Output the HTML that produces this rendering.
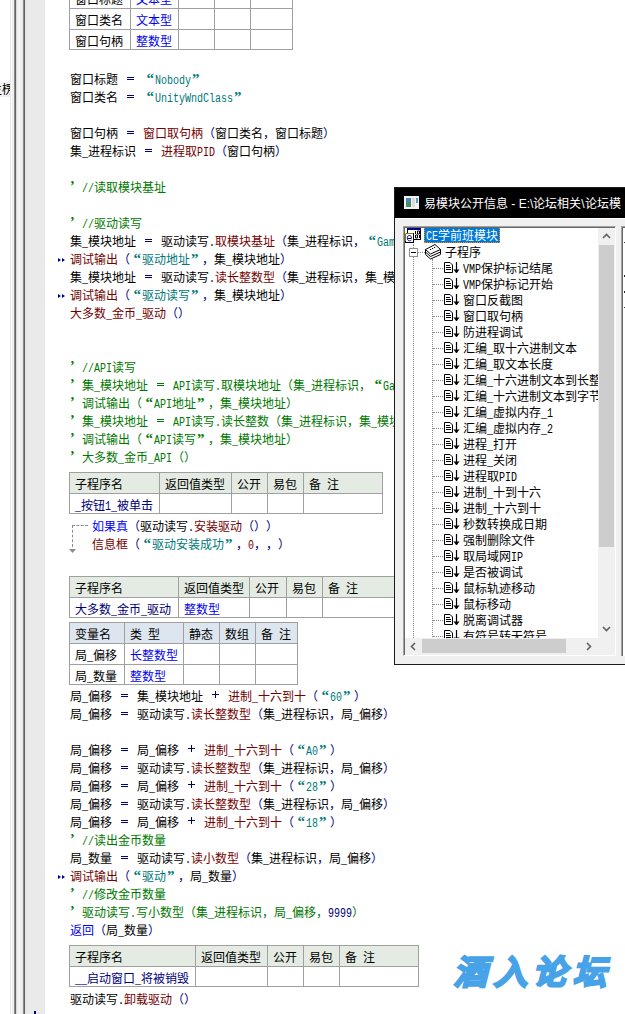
<!DOCTYPE html>
<html lang="zh-CN"><head><meta charset="utf-8"><style>
html,body{margin:0;padding:0}
body{width:625px;height:1014px;position:relative;overflow:hidden;background:#fff;font-family:"Liberation Mono",monospace;font-size:12px;text-spacing-trim:space-all;font-kerning:none}
.ln{position:absolute;white-space:pre;line-height:18px;height:18px;color:#000}
i{font-style:normal}
.ql,.qr{display:inline-block;width:12px;height:18px;vertical-align:top;position:relative}
.ql:before,.qr:before{position:absolute;top:0;font:bold 15px/15px "Liberation Serif",serif}
.ql:before{content:"\201C";right:1px;top:-1px}
.qr:before{content:"\201D";left:1px}
.op{display:inline-block;width:25px;height:18px;vertical-align:top;position:relative}
.eq:before{content:"";position:absolute;left:9px;top:5px;width:7px;height:1px;border-top:1px solid;border-bottom:1px solid}
.pl:before{content:"";position:absolute;left:9px;top:5px;width:7px;height:1px;background:currentColor}
.pl:after{content:"";position:absolute;left:12px;top:2px;width:1px;height:7px;background:currentColor}
.a,.c{display:inline-block;font-weight:normal}
.a>b{display:inline-block;font-weight:normal;transform:scaleX(.8333);transform-origin:0 0}
.abs{position:absolute}
.ap{display:inline-block;width:6px;height:18px;vertical-align:top;position:relative}
.ap:before{content:"\2019";position:absolute;left:0px;top:0px;font:bold 14px/14px "Liberation Serif",serif}
.mk{position:absolute;left:58px;width:8px;height:5px}
.mk:before,.mk:after{content:"";position:absolute;top:0;border-left:3px solid #000080;border-top:2.5px solid transparent;border-bottom:2.5px solid transparent}
.mk:before{left:0}.mk:after{left:4px}
#pop{position:absolute;left:394px;top:187px;width:260px;height:478px;background:#f0f0f0;border:1px solid #1b1b1b;box-sizing:border-box;overflow:hidden}
#ttl{position:absolute;left:0;top:0;right:0;height:30px;background:#000}
#tbox{position:absolute;left:8px;top:38px;width:211px;height:428px;background:#fff;border-left:1px solid #a0a0a0;border-top:1px solid #a0a0a0;border-right:1px solid #fff;border-bottom:1px solid #fff;box-shadow:inset 1px 1px 0 #696969}
#tcli{position:absolute;left:1px;top:1px;width:193px;height:410px;overflow:hidden;background:#fff}
.vd{position:absolute;width:0;border-left:1px dotted #8a8a8a}
.hd{position:absolute;height:0;border-top:1px dotted #8a8a8a}
#rbox{position:absolute;left:226px;top:38px;width:20px;height:429px;background:#fff;border-left:1px solid #a0a0a0;border-top:1px solid #a0a0a0;box-shadow:inset 1px 1px 0 #696969}
</style></head><body>
<svg width="0" height="0" style="position:absolute"><defs><g id="itm"><path d="M0.5 0.5 H6 L8.5 3 V10.5 H0.5 Z" fill="#fff" stroke="#000"/><path d="M2 3.5h4M2 5.5h5M2 7.5h5" stroke="#000"/><path d="M12.5 0 V10" stroke="#000" stroke-width="1.2"/><path d="M10 7.5 L12.5 11 L15 7.5" fill="#000" stroke="#000" stroke-width="0.8"/></g></defs></svg>
<div style="position:absolute;left:10px;top:0;width:35px;height:1014px;background:linear-gradient(to right,#e8e8e8 0 1px,#fafafa 1px 2px,#efefef 2px 4px,#8a8a8a 4px 5px,#646464 5px 6px,#d8d8d8 6px 7px,#f0f0f0 7px 9px,#f8f8f8 9px 10px,#ececec 10px 13px,#8a8a8a 13px 14px,#646464 14px 15px,#e2e2e2 15px 16px,#eaeaea 16px 35px)"></div>
<div style="position:absolute;left:0;top:82px;width:10px;height:15px;background:#f0f0f0;overflow:hidden"><div class="ln" style="left:-10px;top:0px">主楞</div></div>
<div style="position:absolute;left:69px;top:-13px;width:224px;height:1px;background:#a0a0a0"></div>
<div style="position:absolute;left:69px;top:8px;width:224px;height:1px;background:#a0a0a0"></div>
<div style="position:absolute;left:69px;top:29px;width:224px;height:1px;background:#a0a0a0"></div>
<div style="position:absolute;left:69px;top:49px;width:224px;height:1px;background:#a0a0a0"></div>
<div style="position:absolute;left:69px;top:-13px;width:1px;height:63px;background:#a0a0a0"></div>
<div style="position:absolute;left:130px;top:-13px;width:1px;height:63px;background:#a0a0a0"></div>
<div style="position:absolute;left:178px;top:-13px;width:1px;height:63px;background:#a0a0a0"></div>
<div style="position:absolute;left:214px;top:-13px;width:1px;height:63px;background:#a0a0a0"></div>
<div style="position:absolute;left:250px;top:-13px;width:1px;height:63px;background:#a0a0a0"></div>
<div style="position:absolute;left:292px;top:-13px;width:1px;height:63px;background:#a0a0a0"></div>
<div class="ln" style="left:75px;top:-8px"><b class="c" style="width:48px">窗口标题</b></div>
<div class="ln" style="left:136px;top:-8px"><span style="color:#0000f0"><b class="c" style="width:36px">文本型</b></span></div>
<div class="ln" style="left:75px;top:13px"><b class="c" style="width:48px">窗口类名</b></div>
<div class="ln" style="left:136px;top:13px"><span style="color:#0000f0"><b class="c" style="width:36px">文本型</b></span></div>
<div class="ln" style="left:75px;top:34px"><b class="c" style="width:48px">窗口句柄</b></div>
<div class="ln" style="left:136px;top:34px"><span style="color:#0000f0"><b class="c" style="width:36px">整数型</b></span></div>
<div class="ln" style="left:70px;top:72px"><b class="c" style="width:48px">窗口标题</b><span style="color:#000078"><i class="op eq"></i></span><span style="color:#007878"><i class="ql"></i><b class="a" style="width:36px"><b>Nobody</b></b><i class="qr"></i></span></div>
<div class="ln" style="left:70px;top:90px"><b class="c" style="width:48px">窗口类名</b><span style="color:#000078"><i class="op eq"></i></span><span style="color:#007878"><i class="ql"></i><b class="a" style="width:78px"><b>UnityWndClass</b></b><i class="qr"></i></span></div>
<div class="ln" style="left:70px;top:126px"><b class="c" style="width:48px">窗口句柄</b><span style="color:#000078"><i class="op eq"></i></span><span style="color:#740000"><b class="c" style="width:60px">窗口取句柄</b></span><b class="c" style="width:12px;color:#000080">（</b><b class="c" style="width:48px">窗口类名</b><b class="c" style="width:12px;color:#000080">，</b><b class="c" style="width:48px">窗口标题</b><b class="c" style="width:12px;color:#000080">）</b></div>
<div class="ln" style="left:70px;top:144px"><b class="c" style="width:12px">集</b><b class="a" style="width:6px"><b>_</b></b><b class="c" style="width:48px">进程标识</b><span style="color:#000078"><i class="op eq"></i></span><span style="color:#740000"><b class="c" style="width:36px">进程取</b><b class="a" style="width:18px"><b>PID</b></b></span><b class="c" style="width:12px;color:#000080">（</b><b class="c" style="width:48px">窗口句柄</b><b class="c" style="width:12px;color:#000080">）</b></div>
<div class="ln" style="left:70px;top:180px"><span style="color:#007800"><i class="ap"></i><b class="a" style="width:18px"><b> //</b></b><b class="c" style="width:72px">读取模块基址</b></span></div>
<div class="ln" style="left:70px;top:216px"><span style="color:#007800"><i class="ap"></i><b class="a" style="width:18px"><b> //</b></b><b class="c" style="width:48px">驱动读写</b></span></div>
<div class="ln" style="left:70px;top:234px"><b class="c" style="width:12px">集</b><b class="a" style="width:6px"><b>_</b></b><b class="c" style="width:48px">模块地址</b><span style="color:#000078"><i class="op eq"></i></span><b class="c" style="width:48px">驱动读写</b><b class="a" style="width:6px"><b>.</b></b><span style="color:#740000"><b class="c" style="width:60px">取模块基址</b></span><b class="c" style="width:12px;color:#000080">（</b><b class="c" style="width:12px">集</b><b class="a" style="width:6px"><b>_</b></b><b class="c" style="width:48px">进程标识</b><b class="c" style="width:12px;color:#000080">，</b><span style="color:#007878"><i class="ql"></i><b class="a" style="width:96px"><b>GameAssembly.dll</b></b><i class="qr"></i></span><b class="c" style="width:12px;color:#000080">）</b></div>
<div class="ln" style="left:70px;top:252px"><span style="color:#740000"><b class="c" style="width:48px">调试输出</b></span><b class="c" style="width:12px;color:#000080">（</b><span style="color:#007878"><i class="ql"></i><b class="c" style="width:48px">驱动地址</b><i class="qr"></i></span><b class="c" style="width:12px;color:#000080">，</b><b class="c" style="width:12px">集</b><b class="a" style="width:6px"><b>_</b></b><b class="c" style="width:48px">模块地址</b><b class="c" style="width:12px;color:#000080">）</b></div>
<div class="ln" style="left:70px;top:270px"><b class="c" style="width:12px">集</b><b class="a" style="width:6px"><b>_</b></b><b class="c" style="width:48px">模块地址</b><span style="color:#000078"><i class="op eq"></i></span><b class="c" style="width:48px">驱动读写</b><b class="a" style="width:6px"><b>.</b></b><span style="color:#740000"><b class="c" style="width:60px">读长整数型</b></span><b class="c" style="width:12px;color:#000080">（</b><b class="c" style="width:12px">集</b><b class="a" style="width:6px"><b>_</b></b><b class="c" style="width:48px">进程标识</b><b class="c" style="width:12px;color:#000080">，</b><b class="c" style="width:12px">集</b><b class="a" style="width:6px"><b>_</b></b><b class="c" style="width:48px">模块地址</b><b class="c" style="width:12px;color:#000080">）</b></div>
<div class="ln" style="left:70px;top:288px"><span style="color:#740000"><b class="c" style="width:48px">调试输出</b></span><b class="c" style="width:12px;color:#000080">（</b><span style="color:#007878"><i class="ql"></i><b class="c" style="width:48px">驱动读写</b><i class="qr"></i></span><b class="c" style="width:12px;color:#000080">，</b><b class="c" style="width:12px">集</b><b class="a" style="width:6px"><b>_</b></b><b class="c" style="width:48px">模块地址</b><b class="c" style="width:12px;color:#000080">）</b></div>
<div class="ln" style="left:70px;top:306px"><span style="color:#740000"><b class="c" style="width:36px">大多数</b><b class="a" style="width:6px"><b>_</b></b><b class="c" style="width:24px">金币</b><b class="a" style="width:6px"><b>_</b></b><b class="c" style="width:24px">驱动</b></span><b class="c" style="width:12px;color:#000080">（</b><b class="c" style="width:12px;color:#000080">）</b></div>
<div class="ln" style="left:70px;top:360px"><span style="color:#007800"><i class="ap"></i><b class="a" style="width:36px"><b> //API</b></b><b class="c" style="width:24px">读写</b></span></div>
<div class="ln" style="left:70px;top:378px"><span style="color:#007800"><i class="ap"></i><b class="a" style="width:6px"><b> </b></b><b class="c" style="width:12px">集</b><b class="a" style="width:6px"><b>_</b></b><b class="c" style="width:48px">模块地址</b><i class="op eq"></i><b class="a" style="width:18px"><b>API</b></b><b class="c" style="width:24px">读写</b><b class="a" style="width:6px"><b>.</b></b><b class="c" style="width:84px">取模块地址（集</b><b class="a" style="width:6px"><b>_</b></b><b class="c" style="width:60px">进程标识，</b><i class="ql"></i><b class="a" style="width:96px"><b>GameAssembly.dll</b></b><i class="qr"></i><b class="c" style="width:12px">）</b></span></div>
<div class="ln" style="left:70px;top:396px"><span style="color:#007800"><i class="ap"></i><b class="a" style="width:6px"><b> </b></b><b class="c" style="width:60px">调试输出（</b><i class="ql"></i><b class="a" style="width:18px"><b>API</b></b><b class="c" style="width:24px">地址</b><i class="qr"></i><b class="c" style="width:24px">，集</b><b class="a" style="width:6px"><b>_</b></b><b class="c" style="width:60px">模块地址）</b></span></div>
<div class="ln" style="left:70px;top:414px"><span style="color:#007800"><i class="ap"></i><b class="a" style="width:6px"><b> </b></b><b class="c" style="width:12px">集</b><b class="a" style="width:6px"><b>_</b></b><b class="c" style="width:48px">模块地址</b><i class="op eq"></i><b class="a" style="width:18px"><b>API</b></b><b class="c" style="width:24px">读写</b><b class="a" style="width:6px"><b>.</b></b><b class="c" style="width:72px">读长整数（集</b><b class="a" style="width:6px"><b>_</b></b><b class="c" style="width:72px">进程标识，集</b><b class="a" style="width:6px"><b>_</b></b><b class="c" style="width:60px">模块地址）</b></span></div>
<div class="ln" style="left:70px;top:432px"><span style="color:#007800"><i class="ap"></i><b class="a" style="width:6px"><b> </b></b><b class="c" style="width:60px">调试输出（</b><i class="ql"></i><b class="a" style="width:18px"><b>API</b></b><b class="c" style="width:24px">读写</b><i class="qr"></i><b class="c" style="width:24px">，集</b><b class="a" style="width:6px"><b>_</b></b><b class="c" style="width:60px">模块地址）</b></span></div>
<div class="ln" style="left:70px;top:450px"><span style="color:#007800"><i class="ap"></i><b class="a" style="width:6px"><b> </b></b><b class="c" style="width:36px">大多数</b><b class="a" style="width:6px"><b>_</b></b><b class="c" style="width:24px">金币</b><b class="a" style="width:24px"><b>_API</b></b><b class="c" style="width:24px">（）</b></span></div>
<div style="position:absolute;left:69px;top:472px;width:313px;height:21px;background:#e4ebe3"></div>
<div style="position:absolute;left:69px;top:472px;width:314px;height:1px;background:#a0a0a0"></div>
<div style="position:absolute;left:69px;top:493px;width:314px;height:1px;background:#a0a0a0"></div>
<div style="position:absolute;left:69px;top:513px;width:314px;height:1px;background:#a0a0a0"></div>
<div style="position:absolute;left:69px;top:472px;width:1px;height:42px;background:#a0a0a0"></div>
<div style="position:absolute;left:159px;top:472px;width:1px;height:42px;background:#a0a0a0"></div>
<div style="position:absolute;left:231px;top:472px;width:1px;height:42px;background:#a0a0a0"></div>
<div style="position:absolute;left:267px;top:472px;width:1px;height:42px;background:#a0a0a0"></div>
<div style="position:absolute;left:303px;top:472px;width:1px;height:42px;background:#a0a0a0"></div>
<div style="position:absolute;left:382px;top:472px;width:1px;height:42px;background:#a0a0a0"></div>
<div class="ln" style="left:75px;top:477px"><b class="c" style="width:48px">子程序名</b></div>
<div class="ln" style="left:165px;top:477px"><b class="c" style="width:60px">返回值类型</b></div>
<div class="ln" style="left:237px;top:477px"><b class="c" style="width:24px">公开</b></div>
<div class="ln" style="left:273px;top:477px"><b class="c" style="width:24px">易包</b></div>
<div class="ln" style="left:309px;top:477px"><b class="c" style="width:12px">备</b><b class="a" style="width:6px"><b> </b></b><b class="c" style="width:12px">注</b></div>
<div class="ln" style="left:75px;top:498px"><span style="color:#000078"><b class="a" style="width:6px"><b>_</b></b><b class="c" style="width:24px">按钮</b><b class="a" style="width:12px"><b>1_</b></b><b class="c" style="width:36px">被单击</b></span></div>
<div class="ln" style="left:92px;top:519px"><span style="color:#0000f0"><b class="c" style="width:36px">如果真</b></span><b class="c" style="width:12px;color:#000080">（</b><b class="c" style="width:48px">驱动读写</b><b class="a" style="width:6px"><b>.</b></b><span style="color:#740000"><b class="c" style="width:48px">安装驱动</b></span><span style="color:#000078"><b class="c" style="width:36px">（））</b></span></div>
<div class="ln" style="left:92px;top:537px"><span style="color:#740000"><b class="c" style="width:36px">信息框</b></span><b class="c" style="width:12px;color:#000080">（</b><span style="color:#007878"><i class="ql"></i><b class="c" style="width:72px">驱动安装成功</b><i class="qr"></i></span><b class="c" style="width:12px;color:#000080">，</b><span style="color:#740000"><b class="a" style="width:6px"><b>0</b></b></span><b class="c" style="width:12px;color:#000080">，</b><b class="c" style="width:12px;color:#000080">，</b><span style="color:#000078"><b class="c" style="width:12px">）</b></span></div>
<div style="position:absolute;left:69px;top:576px;width:451px;height:21px;background:#e4ebe3"></div>
<div style="position:absolute;left:69px;top:576px;width:452px;height:1px;background:#a0a0a0"></div>
<div style="position:absolute;left:69px;top:597px;width:452px;height:1px;background:#a0a0a0"></div>
<div style="position:absolute;left:69px;top:617px;width:452px;height:1px;background:#a0a0a0"></div>
<div style="position:absolute;left:69px;top:576px;width:1px;height:42px;background:#a0a0a0"></div>
<div style="position:absolute;left:178px;top:576px;width:1px;height:42px;background:#a0a0a0"></div>
<div style="position:absolute;left:249px;top:576px;width:1px;height:42px;background:#a0a0a0"></div>
<div style="position:absolute;left:286px;top:576px;width:1px;height:42px;background:#a0a0a0"></div>
<div style="position:absolute;left:322px;top:576px;width:1px;height:42px;background:#a0a0a0"></div>
<div style="position:absolute;left:520px;top:576px;width:1px;height:42px;background:#a0a0a0"></div>
<div class="ln" style="left:75px;top:581px"><b class="c" style="width:48px">子程序名</b></div>
<div class="ln" style="left:184px;top:581px"><b class="c" style="width:60px">返回值类型</b></div>
<div class="ln" style="left:255px;top:581px"><b class="c" style="width:24px">公开</b></div>
<div class="ln" style="left:292px;top:581px"><b class="c" style="width:24px">易包</b></div>
<div class="ln" style="left:328px;top:581px"><b class="c" style="width:12px">备</b><b class="a" style="width:6px"><b> </b></b><b class="c" style="width:12px">注</b></div>
<div class="ln" style="left:75px;top:602px"><span style="color:#000078"><b class="c" style="width:36px">大多数</b><b class="a" style="width:6px"><b>_</b></b><b class="c" style="width:24px">金币</b><b class="a" style="width:6px"><b>_</b></b><b class="c" style="width:24px">驱动</b></span></div>
<div class="ln" style="left:184px;top:602px"><span style="color:#0000f0"><b class="c" style="width:36px">整数型</b></span></div>
<div style="position:absolute;left:69px;top:622px;width:228px;height:21px;background:#dde6ef"></div>
<div style="position:absolute;left:69px;top:622px;width:229px;height:1px;background:#a0a0a0"></div>
<div style="position:absolute;left:69px;top:643px;width:229px;height:1px;background:#a0a0a0"></div>
<div style="position:absolute;left:69px;top:664px;width:229px;height:1px;background:#a0a0a0"></div>
<div style="position:absolute;left:69px;top:684px;width:229px;height:1px;background:#a0a0a0"></div>
<div style="position:absolute;left:69px;top:622px;width:1px;height:63px;background:#a0a0a0"></div>
<div style="position:absolute;left:124px;top:622px;width:1px;height:63px;background:#a0a0a0"></div>
<div style="position:absolute;left:183px;top:622px;width:1px;height:63px;background:#a0a0a0"></div>
<div style="position:absolute;left:219px;top:622px;width:1px;height:63px;background:#a0a0a0"></div>
<div style="position:absolute;left:255px;top:622px;width:1px;height:63px;background:#a0a0a0"></div>
<div style="position:absolute;left:297px;top:622px;width:1px;height:63px;background:#a0a0a0"></div>
<div class="ln" style="left:75px;top:627px"><b class="c" style="width:36px">变量名</b></div>
<div class="ln" style="left:130px;top:627px"><b class="c" style="width:12px">类</b><b class="a" style="width:6px"><b> </b></b><b class="c" style="width:12px">型</b></div>
<div class="ln" style="left:189px;top:627px"><b class="c" style="width:24px">静态</b></div>
<div class="ln" style="left:225px;top:627px"><b class="c" style="width:24px">数组</b></div>
<div class="ln" style="left:261px;top:627px"><b class="c" style="width:12px">备</b><b class="a" style="width:6px"><b> </b></b><b class="c" style="width:12px">注</b></div>
<div class="ln" style="left:75px;top:648px"><b class="c" style="width:12px">局</b><b class="a" style="width:6px"><b>_</b></b><b class="c" style="width:24px">偏移</b></div>
<div class="ln" style="left:130px;top:648px"><span style="color:#0000f0"><b class="c" style="width:48px">长整数型</b></span></div>
<div class="ln" style="left:75px;top:669px"><b class="c" style="width:12px">局</b><b class="a" style="width:6px"><b>_</b></b><b class="c" style="width:24px">数量</b></div>
<div class="ln" style="left:130px;top:669px"><span style="color:#0000f0"><b class="c" style="width:36px">整数型</b></span></div>
<div class="ln" style="left:70px;top:689px"><b class="c" style="width:12px">局</b><b class="a" style="width:6px"><b>_</b></b><b class="c" style="width:24px">偏移</b><span style="color:#000078"><i class="op eq"></i></span><b class="c" style="width:12px">集</b><b class="a" style="width:6px"><b>_</b></b><b class="c" style="width:48px">模块地址</b><span style="color:#000078"><i class="op pl"></i></span><span style="color:#740000"><b class="c" style="width:24px">进制</b><b class="a" style="width:6px"><b>_</b></b><b class="c" style="width:48px">十六到十</b></span><b class="c" style="width:12px;color:#000080">（</b><span style="color:#007878"><i class="ql"></i><b class="a" style="width:12px"><b>60</b></b><i class="qr"></i></span><b class="c" style="width:12px;color:#000080">）</b></div>
<div class="ln" style="left:70px;top:707px"><b class="c" style="width:12px">局</b><b class="a" style="width:6px"><b>_</b></b><b class="c" style="width:24px">偏移</b><span style="color:#000078"><i class="op eq"></i></span><b class="c" style="width:48px">驱动读写</b><b class="a" style="width:6px"><b>.</b></b><span style="color:#740000"><b class="c" style="width:60px">读长整数型</b></span><b class="c" style="width:12px;color:#000080">（</b><b class="c" style="width:12px">集</b><b class="a" style="width:6px"><b>_</b></b><b class="c" style="width:48px">进程标识</b><b class="c" style="width:12px;color:#000080">，</b><b class="c" style="width:12px">局</b><b class="a" style="width:6px"><b>_</b></b><b class="c" style="width:24px">偏移</b><b class="c" style="width:12px;color:#000080">）</b></div>
<div class="ln" style="left:70px;top:743px"><b class="c" style="width:12px">局</b><b class="a" style="width:6px"><b>_</b></b><b class="c" style="width:24px">偏移</b><span style="color:#000078"><i class="op eq"></i></span><b class="c" style="width:12px">局</b><b class="a" style="width:6px"><b>_</b></b><b class="c" style="width:24px">偏移</b><span style="color:#000078"><i class="op pl"></i></span><span style="color:#740000"><b class="c" style="width:24px">进制</b><b class="a" style="width:6px"><b>_</b></b><b class="c" style="width:48px">十六到十</b></span><b class="c" style="width:12px;color:#000080">（</b><span style="color:#007878"><i class="ql"></i><b class="a" style="width:12px"><b>A0</b></b><i class="qr"></i></span><b class="c" style="width:12px;color:#000080">）</b></div>
<div class="ln" style="left:70px;top:761px"><b class="c" style="width:12px">局</b><b class="a" style="width:6px"><b>_</b></b><b class="c" style="width:24px">偏移</b><span style="color:#000078"><i class="op eq"></i></span><b class="c" style="width:48px">驱动读写</b><b class="a" style="width:6px"><b>.</b></b><span style="color:#740000"><b class="c" style="width:60px">读长整数型</b></span><b class="c" style="width:12px;color:#000080">（</b><b class="c" style="width:12px">集</b><b class="a" style="width:6px"><b>_</b></b><b class="c" style="width:48px">进程标识</b><b class="c" style="width:12px;color:#000080">，</b><b class="c" style="width:12px">局</b><b class="a" style="width:6px"><b>_</b></b><b class="c" style="width:24px">偏移</b><b class="c" style="width:12px;color:#000080">）</b></div>
<div class="ln" style="left:70px;top:779px"><b class="c" style="width:12px">局</b><b class="a" style="width:6px"><b>_</b></b><b class="c" style="width:24px">偏移</b><span style="color:#000078"><i class="op eq"></i></span><b class="c" style="width:12px">局</b><b class="a" style="width:6px"><b>_</b></b><b class="c" style="width:24px">偏移</b><span style="color:#000078"><i class="op pl"></i></span><span style="color:#740000"><b class="c" style="width:24px">进制</b><b class="a" style="width:6px"><b>_</b></b><b class="c" style="width:48px">十六到十</b></span><b class="c" style="width:12px;color:#000080">（</b><span style="color:#007878"><i class="ql"></i><b class="a" style="width:12px"><b>28</b></b><i class="qr"></i></span><b class="c" style="width:12px;color:#000080">）</b></div>
<div class="ln" style="left:70px;top:797px"><b class="c" style="width:12px">局</b><b class="a" style="width:6px"><b>_</b></b><b class="c" style="width:24px">偏移</b><span style="color:#000078"><i class="op eq"></i></span><b class="c" style="width:48px">驱动读写</b><b class="a" style="width:6px"><b>.</b></b><span style="color:#740000"><b class="c" style="width:60px">读长整数型</b></span><b class="c" style="width:12px;color:#000080">（</b><b class="c" style="width:12px">集</b><b class="a" style="width:6px"><b>_</b></b><b class="c" style="width:48px">进程标识</b><b class="c" style="width:12px;color:#000080">，</b><b class="c" style="width:12px">局</b><b class="a" style="width:6px"><b>_</b></b><b class="c" style="width:24px">偏移</b><b class="c" style="width:12px;color:#000080">）</b></div>
<div class="ln" style="left:70px;top:815px"><b class="c" style="width:12px">局</b><b class="a" style="width:6px"><b>_</b></b><b class="c" style="width:24px">偏移</b><span style="color:#000078"><i class="op eq"></i></span><b class="c" style="width:12px">局</b><b class="a" style="width:6px"><b>_</b></b><b class="c" style="width:24px">偏移</b><span style="color:#000078"><i class="op pl"></i></span><span style="color:#740000"><b class="c" style="width:24px">进制</b><b class="a" style="width:6px"><b>_</b></b><b class="c" style="width:48px">十六到十</b></span><b class="c" style="width:12px;color:#000080">（</b><span style="color:#007878"><i class="ql"></i><b class="a" style="width:12px"><b>18</b></b><i class="qr"></i></span><b class="c" style="width:12px;color:#000080">）</b></div>
<div class="ln" style="left:70px;top:833px"><span style="color:#007800"><i class="ap"></i><b class="a" style="width:18px"><b> //</b></b><b class="c" style="width:72px">读出金币数量</b></span></div>
<div class="ln" style="left:70px;top:851px"><b class="c" style="width:12px">局</b><b class="a" style="width:6px"><b>_</b></b><b class="c" style="width:24px">数量</b><span style="color:#000078"><i class="op eq"></i></span><b class="c" style="width:48px">驱动读写</b><b class="a" style="width:6px"><b>.</b></b><span style="color:#740000"><b class="c" style="width:48px">读小数型</b></span><b class="c" style="width:12px;color:#000080">（</b><b class="c" style="width:12px">集</b><b class="a" style="width:6px"><b>_</b></b><b class="c" style="width:48px">进程标识</b><b class="c" style="width:12px;color:#000080">，</b><b class="c" style="width:12px">局</b><b class="a" style="width:6px"><b>_</b></b><b class="c" style="width:24px">偏移</b><b class="c" style="width:12px;color:#000080">）</b></div>
<div class="ln" style="left:70px;top:869px"><span style="color:#740000"><b class="c" style="width:48px">调试输出</b></span><b class="c" style="width:12px;color:#000080">（</b><span style="color:#007878"><i class="ql"></i><b class="c" style="width:24px">驱动</b><i class="qr"></i></span><b class="c" style="width:12px;color:#000080">，</b><b class="c" style="width:12px">局</b><b class="a" style="width:6px"><b>_</b></b><b class="c" style="width:24px">数量</b><b class="c" style="width:12px;color:#000080">）</b></div>
<div class="ln" style="left:70px;top:887px"><span style="color:#007800"><i class="ap"></i><b class="a" style="width:18px"><b> //</b></b><b class="c" style="width:72px">修改金币数量</b></span></div>
<div class="ln" style="left:70px;top:905px"><span style="color:#007800"><i class="ap"></i><b class="a" style="width:6px"><b> </b></b><b class="c" style="width:48px">驱动读写</b><b class="a" style="width:6px"><b>.</b></b><b class="c" style="width:72px">写小数型（集</b><b class="a" style="width:6px"><b>_</b></b><b class="c" style="width:72px">进程标识，局</b><b class="a" style="width:6px"><b>_</b></b><b class="c" style="width:36px">偏移，</b></span><span style="color:#000078"><b class="a" style="width:24px"><b>9999</b></b></span><span style="color:#007800"><b class="c" style="width:12px">）</b></span></div>
<div class="ln" style="left:70px;top:923px"><span style="color:#0000f0"><b class="c" style="width:24px">返回</b></span><b class="c" style="width:12px;color:#000080">（</b><b class="c" style="width:12px">局</b><b class="a" style="width:6px"><b>_</b></b><b class="c" style="width:24px">数量</b><b class="c" style="width:12px;color:#000080">）</b></div>
<div style="position:absolute;left:69px;top:945px;width:349px;height:21px;background:#e4ebe3"></div>
<div style="position:absolute;left:69px;top:945px;width:350px;height:1px;background:#a0a0a0"></div>
<div style="position:absolute;left:69px;top:966px;width:350px;height:1px;background:#a0a0a0"></div>
<div style="position:absolute;left:69px;top:986px;width:350px;height:1px;background:#a0a0a0"></div>
<div style="position:absolute;left:69px;top:945px;width:1px;height:42px;background:#a0a0a0"></div>
<div style="position:absolute;left:195px;top:945px;width:1px;height:42px;background:#a0a0a0"></div>
<div style="position:absolute;left:267px;top:945px;width:1px;height:42px;background:#a0a0a0"></div>
<div style="position:absolute;left:303px;top:945px;width:1px;height:42px;background:#a0a0a0"></div>
<div style="position:absolute;left:339px;top:945px;width:1px;height:42px;background:#a0a0a0"></div>
<div style="position:absolute;left:418px;top:945px;width:1px;height:42px;background:#a0a0a0"></div>
<div class="ln" style="left:75px;top:950px"><b class="c" style="width:48px">子程序名</b></div>
<div class="ln" style="left:201px;top:950px"><b class="c" style="width:60px">返回值类型</b></div>
<div class="ln" style="left:273px;top:950px"><b class="c" style="width:24px">公开</b></div>
<div class="ln" style="left:309px;top:950px"><b class="c" style="width:24px">易包</b></div>
<div class="ln" style="left:345px;top:950px"><b class="c" style="width:12px">备</b><b class="a" style="width:6px"><b> </b></b><b class="c" style="width:12px">注</b></div>
<div class="ln" style="left:75px;top:971px"><span style="color:#000078"><b class="a" style="width:12px"><b>__</b></b><b class="c" style="width:48px">启动窗口</b><b class="a" style="width:6px"><b>_</b></b><b class="c" style="width:48px">将被销毁</b></span></div>
<div class="ln" style="left:70px;top:992px"><b class="c" style="width:48px">驱动读写</b><b class="a" style="width:6px"><b>.</b></b><span style="color:#740000"><b class="c" style="width:48px">卸载驱动</b></span><b class="c" style="width:12px;color:#000080">（</b><b class="c" style="width:12px;color:#000080">）</b></div>
<div class="abs" style="left:72px;top:525px;width:16px;height:0;border-top:1px dashed #8c8c8c"></div>
<div class="abs" style="left:72px;top:525px;width:0;height:22px;border-left:1px dashed #8c8c8c"></div>
<svg class="abs" style="left:69px;top:549px" width="8" height="5"><path d="M0 0 H7 L3.5 4 Z" fill="#8c8c8c"/></svg>
<div class="mk" style="top:258px"></div><div class="mk" style="top:294px"></div><div class="mk" style="top:875px"></div>
<div class="abs" style="left:34px;top:1011px;width:2px;height:3px;background:#000080"></div>
<div id="pop">
 <div id="ttl"><svg class="abs" style="left:9px;top:8px" width="15" height="13"><rect x="0" y="0" width="15" height="13" fill="#f2f2f2"/><rect x="2" y="2" width="5" height="9" fill="#3f8f6a"/><rect x="2" y="2" width="5" height="4" fill="#4f86c0" opacity=".8"/><rect x="8" y="2" width="3" height="9" fill="#dcdcdc"/><rect x="12" y="2" width="2" height="5" fill="#5a9ccf"/></svg>
 <div class="abs" style="left:29px;top:9px;line-height:15px;font-family:'Liberation Sans',sans-serif;font-size:12px;color:#fff;white-space:pre">易模块公开信息 - E:\论坛相关\论坛模</div></div>
 <div class="abs" style="left:1px;top:30px;width:300px;height:1px;background:#fff"></div>
 <div id="tbox">
  <div id="tcli">
<div class="vd" style="left:8px;top:16px;height:420px"></div>
<div class="vd" style="left:27px;top:31px;height:400px"></div>
<svg class="abs" style="left:0px;top:-1px" width="17" height="17" viewBox="0 0 17 17"><rect x="2.5" y="1.5" width="13" height="11" fill="#fff" stroke="#000"/><rect x="2" y="1" width="14" height="2" fill="#000080"/><path d="M10.5 4v3M12.5 4h2v3h-2zM10.5 8h2v3h-2zM14.5 8v3" fill="none" stroke="#000"/><rect x="0.5" y="6.5" width="8" height="9" fill="#fff" stroke="#000"/><path d="M0.5 6.5h7M0.5 6.5v8" stroke="#ff0" stroke-dasharray="1 1"/><path d="M6.5 11.5h-4.2c0-2 0.6-3 2.1-3s2.1 1 2.1 3M2.5 12c0.3 1.5 1.2 1.8 2 1.8s1.5-0.3 1.8-0.8" fill="none" stroke="#000080" stroke-width="1"/></svg>
<div class="abs" style="left:19px;top:-1px;width:76px;height:16px;background:#0078d7;box-sizing:border-box;border:1px dotted #ff8c00"></div>
<div class="ln" style="left:21px;top:1px;color:#fff;line-height:16px"><b class="a" style="width:12px"><b>CE</b></b><b class="c" style="width:60px">学前班模块</b></div>
<div class="abs" style="left:4px;top:20px;width:9px;height:9px;box-sizing:border-box;border:1px solid #919191;background:#fff"><div class="abs" style="left:1px;top:3px;width:5px;height:1px;background:#000"></div></div>
<div class="hd" style="left:13px;top:24px;width:7px"></div>
<svg class="abs" style="left:20px;top:16px" width="17" height="17" viewBox="0 0 17 17"><path d="M0.5 5.5 V10.5 L5.5 15 L15.5 10.5 V5.5" fill="#fff" stroke="none"/><path d="M0.5 5.5 L10 0.5 L15.5 5.5 L5.5 10 Z" fill="#fff" stroke="#000"/><path d="M0.5 5.5 V8 L5.5 12.5 L15.5 8 V5.5M0.5 8 V10.5 L5.5 15 L15.5 10.5 V8" fill="none" stroke="#000"/><path d="M5 5.5h1.2M7 4.5h1.2M9 3.5h1.2" stroke="#000" stroke-width="1.2"/></svg>
<div class="ln" style="left:40px;top:18px;line-height:16px">子程序</div>
<div class="hd" style="left:28px;top:40px;width:10px"></div>
<svg class="abs" style="left:39px;top:34px" width="16" height="12"><use href="#itm"/></svg>
<div class="ln" style="left:58px;top:34px;line-height:16px"><b class="a" style="width:18px"><b>VMP</b></b><b class="c" style="width:72px">保护标记结尾</b></div>
<div class="hd" style="left:28px;top:56px;width:10px"></div>
<svg class="abs" style="left:39px;top:50px" width="16" height="12"><use href="#itm"/></svg>
<div class="ln" style="left:58px;top:50px;line-height:16px"><b class="a" style="width:18px"><b>VMP</b></b><b class="c" style="width:72px">保护标记开始</b></div>
<div class="hd" style="left:28px;top:72px;width:10px"></div>
<svg class="abs" style="left:39px;top:66px" width="16" height="12"><use href="#itm"/></svg>
<div class="ln" style="left:58px;top:66px;line-height:16px"><b class="c" style="width:60px">窗口反截图</b></div>
<div class="hd" style="left:28px;top:88px;width:10px"></div>
<svg class="abs" style="left:39px;top:82px" width="16" height="12"><use href="#itm"/></svg>
<div class="ln" style="left:58px;top:82px;line-height:16px"><b class="c" style="width:60px">窗口取句柄</b></div>
<div class="hd" style="left:28px;top:104px;width:10px"></div>
<svg class="abs" style="left:39px;top:98px" width="16" height="12"><use href="#itm"/></svg>
<div class="ln" style="left:58px;top:98px;line-height:16px"><b class="c" style="width:60px">防进程调试</b></div>
<div class="hd" style="left:28px;top:120px;width:10px"></div>
<svg class="abs" style="left:39px;top:114px" width="16" height="12"><use href="#itm"/></svg>
<div class="ln" style="left:58px;top:114px;line-height:16px"><b class="c" style="width:24px">汇编</b><b class="a" style="width:6px"><b>_</b></b><b class="c" style="width:84px">取十六进制文本</b></div>
<div class="hd" style="left:28px;top:136px;width:10px"></div>
<svg class="abs" style="left:39px;top:130px" width="16" height="12"><use href="#itm"/></svg>
<div class="ln" style="left:58px;top:130px;line-height:16px"><b class="c" style="width:24px">汇编</b><b class="a" style="width:6px"><b>_</b></b><b class="c" style="width:60px">取文本长度</b></div>
<div class="hd" style="left:28px;top:152px;width:10px"></div>
<svg class="abs" style="left:39px;top:146px" width="16" height="12"><use href="#itm"/></svg>
<div class="ln" style="left:58px;top:146px;line-height:16px"><b class="c" style="width:24px">汇编</b><b class="a" style="width:6px"><b>_</b></b><b class="c" style="width:120px">十六进制文本到长整数</b></div>
<div class="hd" style="left:28px;top:168px;width:10px"></div>
<svg class="abs" style="left:39px;top:162px" width="16" height="12"><use href="#itm"/></svg>
<div class="ln" style="left:58px;top:162px;line-height:16px"><b class="c" style="width:24px">汇编</b><b class="a" style="width:6px"><b>_</b></b><b class="c" style="width:108px">十六进制文本到字节</b></div>
<div class="hd" style="left:28px;top:184px;width:10px"></div>
<svg class="abs" style="left:39px;top:178px" width="16" height="12"><use href="#itm"/></svg>
<div class="ln" style="left:58px;top:178px;line-height:16px"><b class="c" style="width:24px">汇编</b><b class="a" style="width:6px"><b>_</b></b><b class="c" style="width:48px">虚拟内存</b><b class="a" style="width:12px"><b>_1</b></b></div>
<div class="hd" style="left:28px;top:200px;width:10px"></div>
<svg class="abs" style="left:39px;top:194px" width="16" height="12"><use href="#itm"/></svg>
<div class="ln" style="left:58px;top:194px;line-height:16px"><b class="c" style="width:24px">汇编</b><b class="a" style="width:6px"><b>_</b></b><b class="c" style="width:48px">虚拟内存</b><b class="a" style="width:12px"><b>_2</b></b></div>
<div class="hd" style="left:28px;top:216px;width:10px"></div>
<svg class="abs" style="left:39px;top:210px" width="16" height="12"><use href="#itm"/></svg>
<div class="ln" style="left:58px;top:210px;line-height:16px"><b class="c" style="width:24px">进程</b><b class="a" style="width:6px"><b>_</b></b><b class="c" style="width:24px">打开</b></div>
<div class="hd" style="left:28px;top:232px;width:10px"></div>
<svg class="abs" style="left:39px;top:226px" width="16" height="12"><use href="#itm"/></svg>
<div class="ln" style="left:58px;top:226px;line-height:16px"><b class="c" style="width:24px">进程</b><b class="a" style="width:6px"><b>_</b></b><b class="c" style="width:24px">关闭</b></div>
<div class="hd" style="left:28px;top:248px;width:10px"></div>
<svg class="abs" style="left:39px;top:242px" width="16" height="12"><use href="#itm"/></svg>
<div class="ln" style="left:58px;top:242px;line-height:16px"><b class="c" style="width:36px">进程取</b><b class="a" style="width:18px"><b>PID</b></b></div>
<div class="hd" style="left:28px;top:264px;width:10px"></div>
<svg class="abs" style="left:39px;top:258px" width="16" height="12"><use href="#itm"/></svg>
<div class="ln" style="left:58px;top:258px;line-height:16px"><b class="c" style="width:24px">进制</b><b class="a" style="width:6px"><b>_</b></b><b class="c" style="width:48px">十到十六</b></div>
<div class="hd" style="left:28px;top:280px;width:10px"></div>
<svg class="abs" style="left:39px;top:274px" width="16" height="12"><use href="#itm"/></svg>
<div class="ln" style="left:58px;top:274px;line-height:16px"><b class="c" style="width:24px">进制</b><b class="a" style="width:6px"><b>_</b></b><b class="c" style="width:48px">十六到十</b></div>
<div class="hd" style="left:28px;top:296px;width:10px"></div>
<svg class="abs" style="left:39px;top:290px" width="16" height="12"><use href="#itm"/></svg>
<div class="ln" style="left:58px;top:290px;line-height:16px"><b class="c" style="width:84px">秒数转换成日期</b></div>
<div class="hd" style="left:28px;top:312px;width:10px"></div>
<svg class="abs" style="left:39px;top:306px" width="16" height="12"><use href="#itm"/></svg>
<div class="ln" style="left:58px;top:306px;line-height:16px"><b class="c" style="width:72px">强制删除文件</b></div>
<div class="hd" style="left:28px;top:328px;width:10px"></div>
<svg class="abs" style="left:39px;top:322px" width="16" height="12"><use href="#itm"/></svg>
<div class="ln" style="left:58px;top:322px;line-height:16px"><b class="c" style="width:48px">取局域网</b><b class="a" style="width:12px"><b>IP</b></b></div>
<div class="hd" style="left:28px;top:344px;width:10px"></div>
<svg class="abs" style="left:39px;top:338px" width="16" height="12"><use href="#itm"/></svg>
<div class="ln" style="left:58px;top:338px;line-height:16px"><b class="c" style="width:60px">是否被调试</b></div>
<div class="hd" style="left:28px;top:360px;width:10px"></div>
<svg class="abs" style="left:39px;top:354px" width="16" height="12"><use href="#itm"/></svg>
<div class="ln" style="left:58px;top:354px;line-height:16px"><b class="c" style="width:72px">鼠标轨迹移动</b></div>
<div class="hd" style="left:28px;top:376px;width:10px"></div>
<svg class="abs" style="left:39px;top:370px" width="16" height="12"><use href="#itm"/></svg>
<div class="ln" style="left:58px;top:370px;line-height:16px"><b class="c" style="width:48px">鼠标移动</b></div>
<div class="hd" style="left:28px;top:392px;width:10px"></div>
<svg class="abs" style="left:39px;top:386px" width="16" height="12"><use href="#itm"/></svg>
<div class="ln" style="left:58px;top:386px;line-height:16px"><b class="c" style="width:60px">脱离调试器</b></div>
<div class="hd" style="left:28px;top:408px;width:10px"></div>
<svg class="abs" style="left:39px;top:402px" width="16" height="12"><use href="#itm"/></svg>
<div class="ln" style="left:58px;top:402px;line-height:16px"><b class="c" style="width:84px">有符号转无符号</b></div>
  </div>
  <div class="abs" style="left:194px;top:1px;width:17px;height:427px;background:#f0f0f0"></div>
  <div class="abs" style="left:195px;top:18px;width:15px;height:302px;background:#cdcdcd"></div>
  <svg class="abs" style="left:198px;top:6px" width="9" height="6"><path d="M1 5 L4.5 1.5 L8 5" fill="none" stroke="#606060" stroke-width="1.6"/></svg>
  <svg class="abs" style="left:198px;top:399px" width="9" height="6"><path d="M1 1 L4.5 4.5 L8 1" fill="none" stroke="#606060" stroke-width="1.6"/></svg>
  <div class="abs" style="left:1px;top:411px;width:193px;height:17px;background:#f0f0f0"></div>
  <div class="abs" style="left:18px;top:412px;width:144px;height:14px;background:#cdcdcd"></div>
  <svg class="abs" style="left:6px;top:415px" width="6" height="9"><path d="M5 1 L1.5 4.5 L5 8" fill="none" stroke="#606060" stroke-width="1.6"/></svg>
  <svg class="abs" style="left:182px;top:415px" width="6" height="9"><path d="M1 1 L4.5 4.5 L1 8" fill="none" stroke="#606060" stroke-width="1.6"/></svg>
 </div>
 <div id="rbox"><div class="abs" style="left:2px;top:15px;width:3px;height:1px;background:#333"></div><div class="abs" style="left:2px;top:48px;width:3px;height:2px;background:#222"></div><div class="abs" style="left:2px;top:64px;width:3px;height:2px;background:#222"></div><div class="abs" style="left:2px;top:80px;width:3px;height:1px;background:#333"></div></div>
</div>
<div style="position:absolute;left:454px;top:951px;font-family:'Liberation Sans',sans-serif;font-weight:900;font-style:italic;font-size:33px;line-height:44px;color:#47a2e8;white-space:pre;letter-spacing:6.5px;-webkit-text-stroke:2.5px #47a2e8">酒入论坛</div>
</body></html>
